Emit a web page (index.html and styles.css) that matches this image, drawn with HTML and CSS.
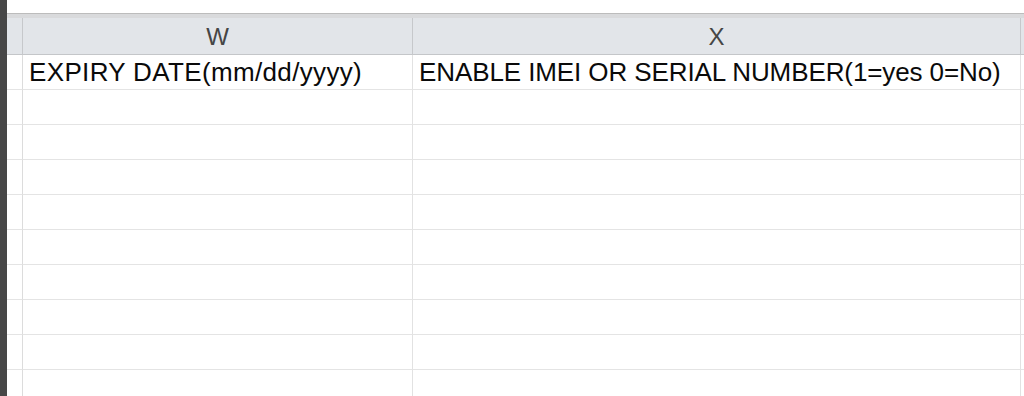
FILE: index.html
```html
<!DOCTYPE html>
<html>
<head>
<meta charset="utf-8">
<link rel="stylesheet" href="styles.css">
</head>
<body>
<div class="app">
  <div class="edge"></div>
  <div class="sheet">
    <div class="toolbar-gap"></div>
    <div class="rule"></div>
    <div class="grid">
      <div class="hdr corner"></div>
      <div class="hdr col">W</div>
      <div class="hdr col">X</div>
      <div class="hdr col tail"></div>

      <div class="rowhead"></div>
      <div class="cell loose">EXPIRY DATE(mm/dd/yyyy)</div>
      <div class="cell">ENABLE IMEI OR SERIAL NUMBER(1=yes 0=No)</div>
      <div class="cell tail"></div>

      <div class="rowhead"></div><div class="cell"></div><div class="cell"></div><div class="cell tail"></div>
      <div class="rowhead"></div><div class="cell"></div><div class="cell"></div><div class="cell tail"></div>
      <div class="rowhead"></div><div class="cell"></div><div class="cell"></div><div class="cell tail"></div>
      <div class="rowhead"></div><div class="cell"></div><div class="cell"></div><div class="cell tail"></div>
      <div class="rowhead"></div><div class="cell"></div><div class="cell"></div><div class="cell tail"></div>
      <div class="rowhead"></div><div class="cell"></div><div class="cell"></div><div class="cell tail"></div>
      <div class="rowhead"></div><div class="cell"></div><div class="cell"></div><div class="cell tail"></div>
      <div class="rowhead"></div><div class="cell"></div><div class="cell"></div><div class="cell tail"></div>
      <div class="rowhead"></div><div class="cell"></div><div class="cell"></div><div class="cell tail"></div>
    </div>
  </div>
</div>
</body>
</html>
```
FILE: styles.css
```css
html, body {
  margin: 0;
  padding: 0;
  background: #ffffff;
  overflow: hidden;
}

.app {
  display: flex;
  width: 1024px;
  height: 396px;
  overflow: hidden;
  font-family: "Liberation Sans", Arial, sans-serif;
}

.edge {
  width: 7px;
  flex: none;
  background: #474747;
}

.sheet {
  flex: 1;
  display: flex;
  flex-direction: column;
  min-width: 0;
}

.toolbar-gap {
  height: 13px;
  flex: none;
}

.rule {
  height: 4px;
  flex: none;
  border-top: 1px solid #bcbcbc;
  background: #d9dadc;
}

.grid {
  display: grid;
  grid-template-columns: 16px 390px 608px 3px;
  grid-template-rows: 37px repeat(10, 35px);
}

.hdr {
  background: #e2e5e9;
  border-bottom: 1px solid #c4c6c9;
  border-right: 1px solid #c6c8cb;
  color: #454545;
  font-size: 24px;
  display: flex;
  align-items: center;
  justify-content: center;
  padding-top: 2px;
}

.hdr.tail,
.cell.tail {
  border-right: none;
}

.rowhead {
  border-right: 1px solid #dcdcdc;
  border-bottom: 1px solid #e4e4e4;
}

.cell {
  border-right: 1px solid #e2e2e2;
  border-bottom: 1px solid #e4e4e4;
  font-size: 26px;
  letter-spacing: -0.1px;
  color: #0a0a0a;
  display: flex;
  align-items: center;
  padding-left: 6px;
  white-space: nowrap;
  overflow: hidden;
}

.cell.loose {
  letter-spacing: 0.35px;
}
```
